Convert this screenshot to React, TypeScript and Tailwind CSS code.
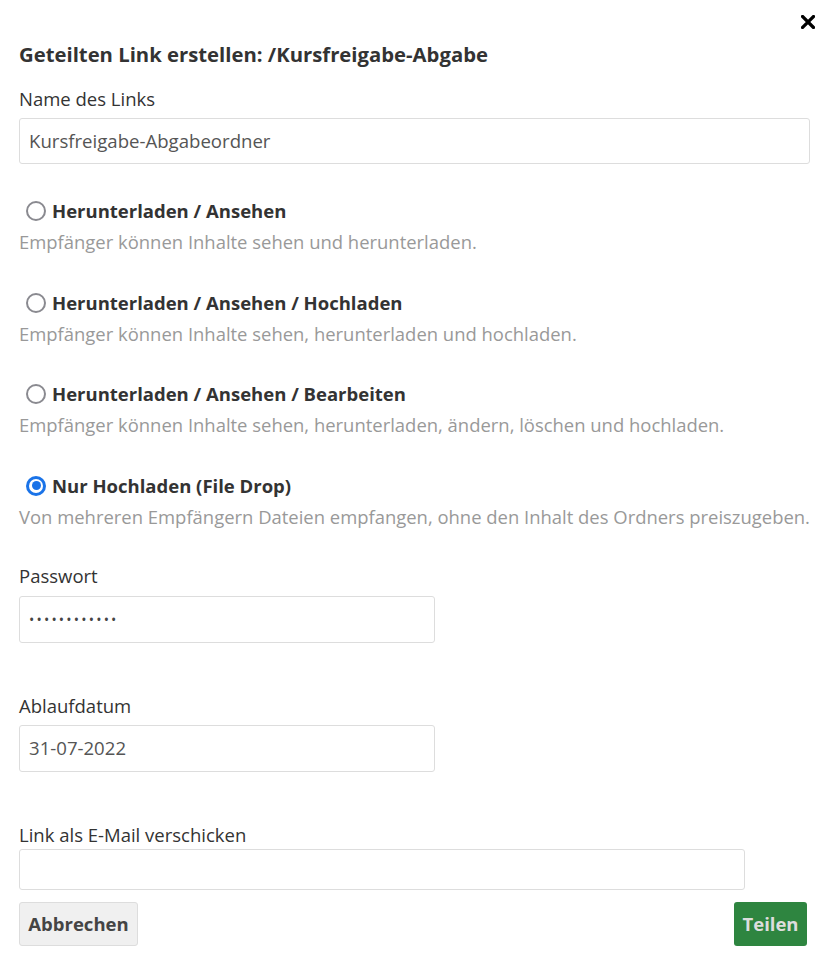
import React from "react";

const options = [
  { label: "Herunterladen / Ansehen", desc: "Empfänger können Inhalte sehen und herunterladen." },
  { label: "Herunterladen / Ansehen / Hochladen", desc: "Empfänger können Inhalte sehen, herunterladen und hochladen." },
  { label: "Herunterladen / Ansehen / Bearbeiten", desc: "Empfänger können Inhalte sehen, herunterladen, ändern, löschen und hochladen." },
  { label: "Nur Hochladen (File Drop)", desc: "Von mehreren Empfängern Dateien empfangen, ohne den Inhalt des Ordners preiszugeben." },
];

function Radio({ checked }: { checked: boolean }) {
  return checked ? (
    <span className="w-[20px] h-[20px] rounded-full bg-[#1a73e8] flex items-center justify-center shrink-0">
      <span className="w-[14px] h-[14px] rounded-full bg-white flex items-center justify-center">
        <span className="w-[9px] h-[9px] rounded-full bg-[#1a73e8]" />
      </span>
    </span>
  ) : (
    <span className="w-[20px] h-[20px] rounded-full border-[2.5px] border-[#8a8a90] bg-white shrink-0" />
  );
}

export default function App() {
  return (
    <div className="w-[829px] h-[975px] bg-white font-['Open_Sans',sans-serif] text-[#333] relative">
      <button className="absolute left-[801px] top-[15px]">
        <svg width="14" height="14" viewBox="0 0 14 14">
          <path d="M1.5 1.5 L12.5 12.5 M12.5 1.5 L1.5 12.5" stroke="#000" strokeWidth="3.2" strokeLinecap="square" />
        </svg>
      </button>
      <div className="px-[19px] pt-[39px]">
        <h2 className="text-[20.3px] font-bold leading-[30px] text-[#333]">Geteilten Link erstellen: /Kursfreigabe-Abgabe</h2>

        <label className="block mt-[17px] text-[18.5px] leading-[26px]">Name des Links</label>
        <div className="mt-[6px] h-[46px] border border-[#ddd] rounded-[3px] px-[9px] flex items-center text-[18.6px] text-[#555]">
          Kursfreigabe-Abgabeordner
        </div>

        <div className="mt-[33px] flex flex-col gap-[31.6px]">
          {options.map((o, i) => (
            <div key={o.label}>
              <div className="flex items-center gap-[6px] pl-[7px] h-[28px]">
                <Radio checked={i === 3} />
                <span className="text-[18.5px] font-bold">{o.label}</span>
              </div>
              <p className="mt-[2px] text-[18.45px] leading-[30px] text-[#999] whitespace-nowrap">{o.desc}</p>
            </div>
          ))}
        </div>

        <label className="block mt-[31px] text-[18.5px] leading-[26px]">Passwort</label>
        <div className="mt-[7px] w-[416px] h-[47px] border border-[#ddd] rounded-[3px] px-[9px] flex items-center text-[14px] tracking-[2.2px] text-[#444]">
          ••••••••••••
        </div>

        <label className="block mt-[50px] text-[18.5px] leading-[26px]">Ablaufdatum</label>
        <div className="mt-[6px] w-[416px] h-[47px] border border-[#ddd] rounded-[3px] px-[9px] flex items-center text-[18.6px] text-[#555]">
          31-07-2022
        </div>

        <label className="block mt-[50px] text-[18.5px] leading-[26px]">Link als E-Mail verschicken</label>
        <div className="mt-[1px] w-[726px] h-[41px] border border-[#ddd] rounded-[3px]" />

        <div className="mt-[12px] flex justify-between pr-[3px]">
          <button className="h-[44px] w-[119px] bg-[#f0f0f0] border border-[#ddd] rounded-[3px] text-[18.5px] font-bold text-[#444]">Abbrechen</button>
          <button className="h-[44px] w-[73px] bg-[#2e8540] rounded-[3px] text-[18.5px] font-bold text-[#ddd]">Teilen</button>
        </div>
      </div>
    </div>
  );
}
